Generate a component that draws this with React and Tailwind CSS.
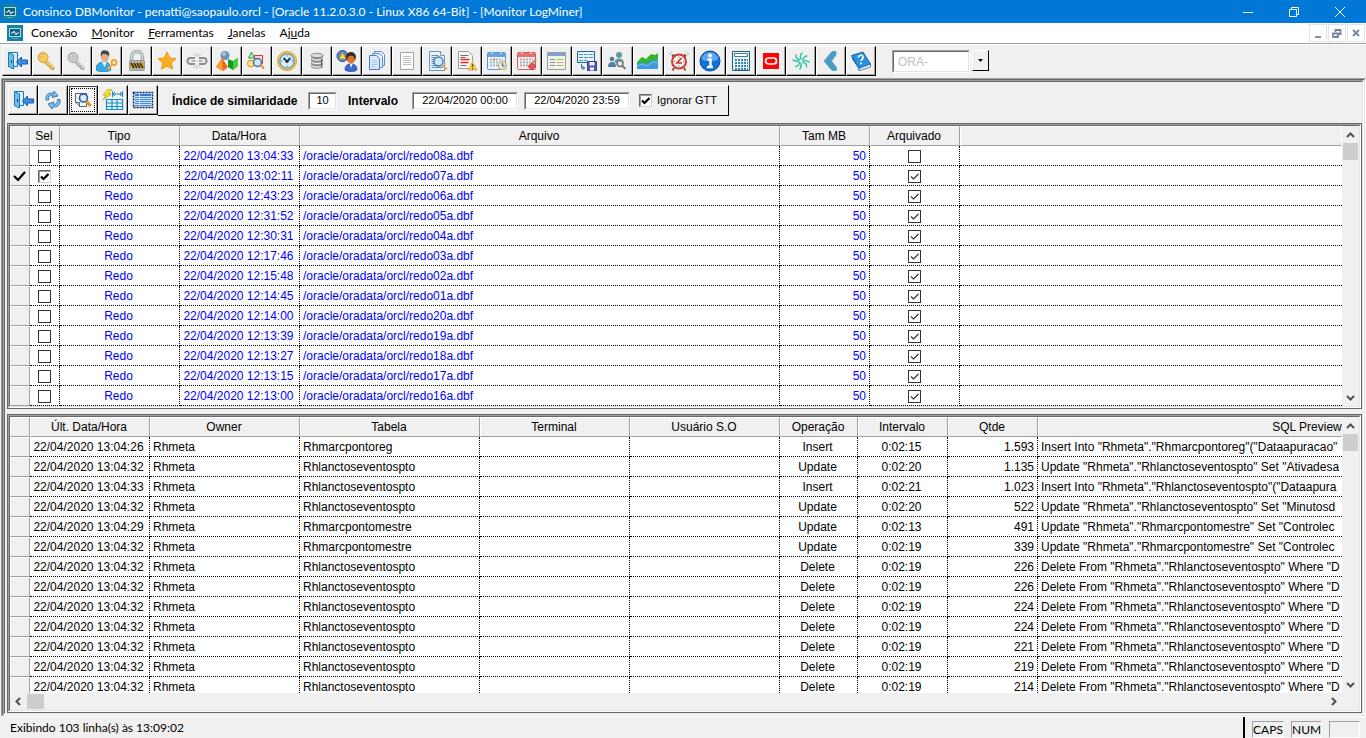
import { useState } from 'react';

const LOGS = [
  ['22/04/2020 13:04:33', '08a', false],
  ['22/04/2020 13:02:11', '07a', true],
  ['22/04/2020 12:43:23', '06a', true],
  ['22/04/2020 12:31:52', '05a', true],
  ['22/04/2020 12:30:31', '04a', true],
  ['22/04/2020 12:17:46', '03a', true],
  ['22/04/2020 12:15:48', '02a', true],
  ['22/04/2020 12:14:45', '01a', true],
  ['22/04/2020 12:14:00', '20a', true],
  ['22/04/2020 12:13:39', '19a', true],
  ['22/04/2020 12:13:27', '18a', true],
  ['22/04/2020 12:13:15', '17a', true],
  ['22/04/2020 12:13:00', '16a', true],
];

const EV = 'Rhlanctoseventospto';
const DEL = 'Delete From "Rhmeta"."Rhlanctoseventospto" Where "D';
const OPS = [
  ['26', 'Rhmarcpontoreg', 'Insert', '0:02:15', '1.593', 'Insert Into "Rhmeta"."Rhmarcpontoreg"("Dataapuracao"'],
  ['32', EV, 'Update', '0:02:20', '1.135', 'Update "Rhmeta"."Rhlanctoseventospto" Set "Ativadesa'],
  ['33', EV, 'Insert', '0:02:21', '1.023', 'Insert Into "Rhmeta"."Rhlanctoseventospto"("Dataapura'],
  ['32', EV, 'Update', '0:02:20', '522', 'Update "Rhmeta"."Rhlanctoseventospto" Set "Minutosd'],
  ['29', 'Rhmarcpontomestre', 'Update', '0:02:13', '491', 'Update "Rhmeta"."Rhmarcpontomestre" Set "Controlec'],
  ['32', 'Rhmarcpontomestre', 'Update', '0:02:19', '339', 'Update "Rhmeta"."Rhmarcpontomestre" Set "Controlec'],
  ['32', EV, 'Delete', '0:02:19', '226', DEL],
  ['32', EV, 'Delete', '0:02:19', '226', DEL],
  ['32', EV, 'Delete', '0:02:19', '224', DEL],
  ['32', EV, 'Delete', '0:02:19', '224', DEL],
  ['32', EV, 'Delete', '0:02:19', '221', DEL],
  ['32', EV, 'Delete', '0:02:19', '219', DEL],
  ['32', EV, 'Delete', '0:02:19', '214', DEL],
];

// toolbar drawings, all on a 22x22 grid
const ICONS = {
  door: <>
    <path d="M2.5 2.5h9v14h-9z" fill="#d9efff" stroke="#1f78b4" />
    <path d="M2.5 2.5l5 2.500v14l-5-2.500z" fill="#6cc0ee" stroke="#1f78b4" />
    <path d="M5.500 10v3" stroke="#0b3f77" />
    <path d="M10.500 12l5-5v3h6v4h-6v3z" fill="#3a8fe2" stroke="#0f5cab" />
  </>,
  key: <>
    <path d="M10 9.500l8 8v2h-2.500l-1.500-1.500 .5-1.500-1.500 .5-5-5z" fill="#edba3c" stroke="#c08f26" strokeWidth=".8" />
    <circle cx="7" cy="7.500" r="5" fill="#f6cd58" stroke="#d3a136" />
    <circle cx="5.200" cy="5.800" r="1.400" fill="#fff6d4" stroke="#b9882a" strokeWidth=".6" />
    <path d="M10.500 11l7 7" stroke="#fbe29a" />
  </>,
  keyGray: <>
    <path d="M10 9.500l8 8v2h-2.500l-1.500-1.500 .5-1.500-1.500 .5-5-5z" fill="#bdbdbd" stroke="#989898" strokeWidth=".8" />
    <circle cx="7" cy="7.500" r="5" fill="#cacaca" stroke="#a8a8a8" />
    <circle cx="5.200" cy="5.800" r="1.400" fill="#f8f8f8" stroke="#949494" strokeWidth=".6" />
    <path d="M10.500 11l7 7" stroke="#e2e2e2" />
  </>,
  userKey: <>
    <path d="M0 20c0-6 3-8 8-8s6 2 7 8c-4 2.500-11 2.500-15 0z" fill="#35a9e6" stroke="#1479b8" strokeWidth=".7" />
    <path d="M6 12l2.500 5 2-5z" fill="#fff" />
    <ellipse cx="9" cy="6.500" rx="4" ry="5.500" fill="#e0ab8a" />
    <path d="M5 7C3.500 1 7-.5 9.500 .5c4 0 4 3 3.500 6C11.500 4 9 4 6.500 4z" fill="#4a4444" />
    <circle cx="18" cy="12.500" r="2.500" fill="none" stroke="#f2a12c" strokeWidth="1.800" />
    <path d="M16 14.500l-4.500 4.500m1-1l1.500 1.500" stroke="#f2a12c" strokeWidth="1.800" />
  </>,
  lock: <>
    <path d="M5.500 11V7a5.500 5.500 0 0 1 11 0v4" fill="none" stroke="#8ea0a0" strokeWidth="3.400" />
    <path d="M5.500 11V7a5.500 5.500 0 0 1 11 0v4" fill="none" stroke="#d3dddd" strokeWidth="1.500" />
    <rect x="3.500" y="10.500" width="15" height="10" rx="1" fill="#b4b4ae" stroke="#85857e" strokeWidth=".7" />
    <rect x="4" y="13" width="14" height="5" fill="#e5a52b" />
    <path d="M5 13l3 5m0-5l3 5m0-5l3 5m0-5l3 5" stroke="#2b2b22" strokeWidth="1.500" />
  </>,
  star: <path d="M11 2l2.800 5.900 6.200.8-4.600 4.300 1.200 6.200-5.600-3-5.600 3 1.200-6.200L2 8.700l6.200-.8z" fill="#fbad22" stroke="#ef9a14" strokeLinejoin="round" />,
  link: <>
    <g fill="none" stroke="#8d8d8d" strokeWidth="2">
      <path d="M9 8H4.500a3 3 0 0 0 0 6H9M13 8h4.500a3 3 0 0 1 0 6H13" />
    </g>
    <path d="M5.500 11h4M12.500 11h4" stroke="#9c9c9c" strokeWidth="1.600" />
    <path d="M11 3v4M7.500 4l1.500 2.500M14.500 4L13 6.500M11 15v4M7.500 18L9 15.500m5.500 2.500L13 15.500" stroke="#bcbcbc" />
  </>,
  shapes: <>
    <circle cx="9" cy="5.500" r="4.500" fill="#6d93b8" />
    <circle cx="8" cy="4" r="2" fill="#a9c4dc" />
    <path d="M6 8l6 9-5 4-7-4z" fill="#f1641d" />
    <path d="M6 8L0 17l7 4z" fill="#fb9d35" />
    <path d="M12 9l5 2 5-3v8l-5 4-5-3z" fill="#159a25" />
    <path d="M17 11l5-3v8l-5 4z" fill="#49cf3c" />
  </>,
  shapeFind: <>
    <path d="M5.500 2L8.500 8h-6z" fill="#c2efc2" stroke="#25a245" />
    <circle cx="5" cy="13.500" r="3.500" fill="#fbe384" stroke="#e08a1c" />
    <path d="M8.500 5.500h8v8h-8z" fill="#ffd9d2" stroke="#d93a28" />
    <circle cx="11.500" cy="12.500" r="4" fill="#cfe6fb" stroke="#3b6fb4" strokeWidth="1.400" />
    <path d="M14.500 15l3.500 3.500" stroke="#e38b23" strokeWidth="2" />
  </>,
  clock: <>
    <circle cx="11" cy="11" r="9.500" fill="#f7c94c" stroke="#d69f2c" />
    <circle cx="11" cy="11" r="7.200" fill="#d9ecfa" stroke="#5e93bf" strokeWidth="1.300" />
    <path d="M11 5v1.500M11 15.500V17M5 11h1.500m9 0H17" stroke="#4785b8" />
    <path d="M7.500 8l3.500 3.500L14.500 8" fill="none" stroke="#1d3552" strokeWidth="1.800" />
    <circle cx="11" cy="11.500" r="1.500" fill="#1d3552" />
  </>,
  db: <>
    <path d="M5 5.500v11c0 3 12 3 12 0v-11z" fill="#8d8d8d" />
    <path d="M5.500 8c1 2.700 10 2.700 11 0M5.500 11.500c1 2.700 10 2.700 11 0M5.500 15c1 2.700 10 2.700 11 0" fill="none" stroke="#f2f2f2" strokeWidth="1.200" />
    <ellipse cx="11" cy="5.500" rx="6" ry="2.200" fill="#dcdcdc" stroke="#8a8a8a" />
    <path d="M15.500 9v8" stroke="#5c5c5c" />
  </>,
  group: <>
    <circle cx="6.500" cy="6" r="5.500" fill="#5c86d8" stroke="#24479e" />
    <path d="M6.500 2l3.500 7H3z" fill="#f5dc3a" stroke="#a88a11" strokeWidth=".7" />
    <circle cx="15" cy="7" r="5" fill="#3b2a20" />
    <circle cx="15" cy="9.500" r="3.700" fill="#e07124" />
    <path d="M9 20c0-5 3-6 6-6s6 1 6 6c-3 2-9 2-12 0z" fill="#3d66d4" stroke="#234398" strokeWidth=".7" />
    <path d="M14 14l1 4 1.500-4z" fill="#fff" />
  </>,
  pages: <>
    <path d="M8.500 1.500h7l3 3v11h-10z" fill="#e8f1ff" stroke="#5c8bd6" />
    <path d="M6.500 3.500h7l3 3v11h-10z" fill="#e8f1ff" stroke="#5c8bd6" />
    <path d="M3.500 5.500h7l3 3v11h-10z" fill="#dbe9fd" stroke="#4a7acb" />
    <path d="M5.500 10.500h6m-6 2h6m-6 2h6m-6 2h4" stroke="#a9c6f0" />
  </>,
  page: <>
    <path d="M4.500 2.500h13v17h-13z" fill="#fdfdfd" stroke="#a3a3a3" />
    <path d="M7 6.500h8m-8 2h8m-8 2h8m-8 2h8m-8 2h8" stroke="#c0c0c0" />
  </>,
  pageFind: <>
    <path d="M3.500 1.500h11l4 4v15h-15z" fill="#eaf3fc" stroke="#6d93bb" />
    <path d="M14.500 1.500v4h4" fill="#fff" stroke="#6d93bb" />
    <path d="M5.500 5.500h7m-7 2h9m-9 2h4m-4 2h3m-3 2h3m-3 2h5m-5 2h11" stroke="#5f8cb8" />
    <circle cx="12.500" cy="11.500" r="4.500" fill="#d2eafb" stroke="#3b7cb4" strokeWidth="1.400" />
    <path d="M16 15l5 4.500" stroke="#e5a552" strokeWidth="2.200" />
  </>,
  pageWarn: <>
    <path d="M2.500 1.500h10l4 4v13h-14z" fill="#f6f6f6" stroke="#9c9c9c" />
    <path d="M4.500 5.500h8m-8 2h5m-5 8h6" stroke="#707070" />
    <path d="M4.500 9.500h9m-9 3h8" stroke="#e02b2b" strokeWidth="1.300" />
    <path d="M16.500 11.500l4.500 8.500h-9z" fill="#f6cf57" stroke="#dfb04a" strokeLinejoin="round" />
    <path d="M16.500 14v3m0 1v1.500" stroke="#6b4c05" strokeWidth="1.200" />
  </>,
  cal: <>
    <rect x="1.500" y="2.500" width="18" height="17" rx="1" fill="#eef4fb" stroke="#5b92c8" />
    <path d="M2 3h17v4H2z" fill="#67a5dd" />
    <path d="M6 1v3m9-3v3" stroke="#c6def2" strokeWidth="1.500" />
    <path d="M4 9.500h13M4 12.500h13M4 15.500h13" stroke="#a3b7cc" strokeWidth="2" strokeDasharray="2 1" />
    <path d="M7 9.500h2" stroke="#ef7d2c" strokeWidth="2" />
    <circle cx="16.500" cy="15.500" r="4" fill="#dcecf8" stroke="#e3b458" strokeWidth="1.500" />
    <path d="M16.500 13v3h2" fill="none" stroke="#2b5581" />
  </>,
  calRed: <>
    <rect x="1.500" y="2.500" width="18" height="17" rx="1" fill="#fbeeee" stroke="#d05c5c" />
    <path d="M2 3h17v4H2z" fill="#e87070" />
    <path d="M6 1v3m9-3v3" stroke="#f6c7c7" strokeWidth="1.500" />
    <path d="M4 9.500h13M4 12.500h13M4 15.500h13" stroke="#aab0b6" strokeWidth="2" strokeDasharray="2 1" />
    <path d="M12 16.500l4-3.500 4 3-4 4z" fill="#e2545c" stroke="#c83a42" />
    <path d="M17 13l3-3.500" stroke="#cf7b4a" strokeWidth="2" />
  </>,
  form: <>
    <path d="M1.500 2.500h18v17h-18z" fill="#f6f2e2" stroke="#9c9c9c" />
    <path d="M2 3h17v3H2z" fill="#7fa3d8" />
    <path d="M4 9.500h5m-5 3h5m-5 3h5" stroke="#6d93cf" />
    <path d="M10.500 9.500h7m-7 3h7m-7 3h7" stroke="#b9ae8b" />
  </>,
  gridSave: <>
    <path d="M1.500 1.500h17v11h-17z" fill="#e6f4fb" stroke="#24658f" />
    <path d="M3 4.500h14M3 7.500h14M3 10.500h8" stroke="#4b95bd" strokeDasharray="4 1" />
    <path d="M5.500 14v4h3m-2-2l2 2-2 2" fill="none" stroke="#1f6795" />
    <path d="M11.500 11.500h9v9h-9z" fill="#5458b4" stroke="#3a3d8c" />
    <path d="M13.500 12h5v3.500h-5zM14 17.500h4v3h-4z" fill="#eef" />
  </>,
  userFind: <>
    <circle cx="13" cy="5" r="3" fill="#5f9c94" />
    <path d="M8.500 13c0-3.500 2-4.500 4.500-4.500s4.500 1 4.500 4.500z" fill="#6b9fae" />
    <circle cx="6" cy="9" r="2.300" fill="#4d7b9d" />
    <path d="M2 17c0-3.500 1.500-5 4-5s4 1.500 4 5z" fill="#4f81a5" />
    <circle cx="14" cy="13.500" r="3" fill="#dfe9ec" stroke="#6d777c" strokeWidth="1.500" />
    <path d="M16.500 16l3 3" stroke="#6d777c" strokeWidth="1.800" />
  </>,
  chart: <>
    <path d="M0 12l5-5 4 2 5-5 4 1 3-2v11H0z" fill="#35b52c" />
    <path d="M0 14l5-2 4 2 6-4 3 1 3-3v11H0z" fill="#3f97df" />
    <path d="M0 16l6-2 4 2 6-4 5 1" fill="none" stroke="#84c5f3" />
  </>,
  alarm: <>
    <path d="M2 5V3.500L4 1.500M20 5V3.500l-2-2" fill="none" stroke="#8aa9c4" strokeDasharray="2 1" />
    <path d="M6 4.500l-2 2M16 4.500l2 2M6 18l-1.500 2.500m11.500-2.500l1.500 2.500" stroke="#8a4a42" strokeWidth="1.800" />
    <circle cx="11" cy="11.500" r="7" fill="#eef1f4" stroke="#cf3a34" strokeWidth="2" />
    <path d="M11 6.500v1m0 8v1m-5-5h1m8 0h1" stroke="#666" />
    <path d="M13.500 8l-4.500 5h5" fill="none" stroke="#cb2e27" strokeWidth="1.600" />
  </>,
  info: <>
    <circle cx="11" cy="11" r="10" fill="#1470d4" stroke="#0a48a0" />
    <path d="M2.500 9C4 0 18 0 19.500 9c-4 3-13 3-17 0z" fill="#5aa9ee" />
    <circle cx="11" cy="5.500" r="2" fill="#fff" />
    <path d="M8.500 9.500H11.500v7.500m-3.500 0h6" fill="none" stroke="#fff" strokeWidth="2.400" />
  </>,
  calc: <>
    <path d="M2.500 1.500h17v19h-17z" fill="#e9f4f8" stroke="#1d5f79" />
    <path d="M4.500 3.500h13v3h-13z" fill="#fff" stroke="#3f7c94" />
    <path d="M5 10h13M5 13h13M5 16h13M5 19h13" stroke="#3a86a8" strokeWidth="2" strokeDasharray="2 1" />
  </>,
  oracle: <>
    <path d="M3 3h16v16H3z" fill="#fb0606" />
    <rect x="5.500" y="8" width="11" height="6" rx="3" fill="none" stroke="#fff" strokeWidth="1.700" />
  </>,
  spark: <g stroke="#2cc2a2" strokeWidth="1.400" fill="none" strokeLinecap="round">
    <path d="M11 9c-1-2-1-4 1-6M13 10c0-2 2-4 4-4M13 11c2-1 4 0 6 1M13 12.500c2 0 4 2 3.500 4.500M11 13c1 2 0 4-1 6M9.500 12.500c0 2-2 4-4 4M9 11c-2 1-4 0-6-1M9.500 9.500c-2 0-4-2-3.500-4.500" />
  </g>,
  back: <path d="M16 1.500h-4L4 11l8 9.500h4.500v-3L11.500 11 16 5z" fill="#4a9dc2" stroke="#3686ab" strokeWidth=".5" />,
  book: <>
    <path d="M1.500 5.500L13 2l7.500 12L9 18.500z" fill="#2a90dd" stroke="#1568ab" />
    <path d="M9 18.500l11.500-4.500v3L10 20.500C8 20.500 8 19.500 9 18.500z" fill="#eef3f7" stroke="#31668f" strokeWidth=".8" />
    <path d="M1.500 5.500L9 18.500c-1 1 0 2 1 2L2 9z" fill="#1568ab" />
    <path d="M8 7.500c1-3 5-3 5 0 0 2-2 2-2 3.500m0 1.500v1.800" fill="none" stroke="#fff" strokeWidth="1.700" />
  </>,
  refresh: <>
    <path d="M4 11c-1-5 3-8 7-6.500l1-2.500 4 5-6 1.500 1-2c-3-1-4.500 1-4.500 4.500z" fill="#7fbde8" stroke="#2a74aa" strokeWidth=".9" />
    <path d="M18 10.500c1 5-3 8.500-7 7L10 20l-4-5 6-2-1 2c3 1 4.500-1 4.500-4.500z" fill="#7fbde8" stroke="#2a74aa" strokeWidth=".9" />
  </>,
  preview: <>
    <path d="M3.500 4.500h11v13h-7l-4-4z" fill="#f2f5f9" stroke="#5b6472" />
    <path d="M3.500 13.500h4v4" fill="#c7ccd4" stroke="#5b6472" />
    <circle cx="11.500" cy="9" r="4" fill="#d6ebfd" stroke="#2f5aa8" strokeWidth="1.600" />
    <path d="M14.500 12l4 5" stroke="#e6961e" strokeWidth="3" />
  </>,
  gridFlash: <>
    <path d="M6 0L1 6h3l-3 5 8-6H6l4-5z" fill="#f7ec1e" stroke="#a89c08" strokeWidth=".7" />
    <path d="M10.500 2v6m10-6v6M11 5h9m-7-2l-2 2 2 2m5-4l2 2-2 2" fill="none" stroke="#1b8ac6" />
    <path d="M4.500 10.500h16v10h-16zM4.500 14h16M4.500 17.500h16M10 10.500v10M15 10.500v10" fill="#e4f5fd" stroke="#1b8ac6" strokeWidth="1.200" />
  </>,
  sheet: <>
    <path d="M1.500 3.500h19v15h-19z" fill="#c8e4fa" stroke="#12264d" strokeWidth="1.400" strokeDasharray="2 1" />
    <path d="M3 5h16v2H3z" fill="#3d78cc" />
    <path d="M3 8.500h16M3 10.500h16M3 12.500h16M3 14.500h16M3 16.500h16" stroke="#5088d2" />
    <path d="M7.500 5v12" stroke="#c8e4fa" />
  </>,
};

const MAIN_BAR = [
  ['door', 'Desconectar'], ['key', 'Conectar'], ['keyGray', 'Trocar senha'], ['userKey', 'Usuários'], ['lock', 'Locks'],
  ['star', 'Favoritos'], ['link', 'Links'], ['shapes', 'Objetos'], ['shapeFind', 'Localizar objetos'], ['clock', 'Sessões'],
  ['db', 'Tablespaces'], ['group', 'Grupos'], ['pages', 'Scripts'], ['page', 'Novo'], ['pageFind', 'Pesquisar'],
  ['pageWarn', 'Alertas'], ['cal', 'Jobs'], ['calRed', 'Jobs removidos'], ['form', 'Parâmetros'], ['gridSave', 'Exportar'],
];
const WIDE_BAR = [['userFind', 'Localizar usuário'], ['chart', 'Gráfico'], ['alarm', 'Alarme'], ['info', 'Informações']];
const END_BAR = [['calc', 'Calculadora'], ['oracle', 'Oracle'], ['spark', 'Consinco'], ['back', 'Voltar'], ['book', 'Ajuda']];
const SUB_BAR = [['door', 'Sair'], ['refresh', 'Atualizar'], ['preview', 'Visualizar'], ['gridFlash', 'Executar'], ['sheet', 'Selecionar']];

const SUNKEN = 'border border-t-[#a0a0a0] border-l-[#a0a0a0] border-r-white border-b-white';
const SUNKEN_IN = 'border border-t-[#696969] border-l-[#696969] border-r-[#e3e3e3] border-b-[#e3e3e3]';
const HEAD = 'h-[20px] bg-[#f0f0f0] border-t border-l border-t-white border-l-white border-r border-b border-r-[#a0a0a0] border-b-[#a0a0a0] py-0 pl-0 pr-[2px] font-normal text-center overflow-hidden';
const CELL = 'h-[20px] border-r border-b border-dotted border-black py-0 overflow-hidden';
const LEFT = `${CELL} px-[3px] text-left`;
const RIGHT = `${CELL} px-[3px] text-right`;
const CENTER = `${CELL} pl-0 pr-[2px] text-center`;
const BOX = 'h-[20px] border-r border-b border-dotted border-black px-0 pt-[2px] pb-0 text-center leading-[12px]';

function ToolButton({ icon, label, wide, active }) {
  return (
    <button
      type="button"
      title={label}
      aria-label={label}
      className={`${wide ? 'w-[31px]' : 'w-[30px]'} h-[30px] shrink-0 bg-[#f0f0f0] border border-t-white border-l-white border-r-black border-b-black`}
    >
      <span className={`flex h-full w-full items-center justify-center border-r border-b border-[#a0a0a0] ${active ? 'border-t border-l border-t-[#404040] border-l-[#404040] bg-[#f8f8f8] p-px' : ''}`}>
        <span className={active ? 'flex h-full w-full items-center justify-center border border-dotted border-black' : ''}>
          <svg viewBox="0 0 22 22" className="block h-[22px] w-[22px]">{ICONS[icon]}</svg>
        </span>
      </span>
    </button>
  );
}

function Sunken({ className, children }) {
  return (
    <div className={`flex ${SUNKEN} ${className || ''}`}>
      <div className={`flex min-w-0 flex-1 ${SUNKEN_IN}`}>{children}</div>
    </div>
  );
}

function Check({ label, checked, onChange, classic, faint }) {
  return (
    <span className="inline-grid h-[13px] w-[13px] align-middle">
      <input
        type="checkbox"
        aria-label={label}
        checked={checked}
        onChange={onChange}
        className={`col-start-1 row-start-1 h-[13px] w-[13px] appearance-none border bg-white ${classic ? 'border-t-[#696969] border-l-[#696969] border-r-[#d0d0d0] border-b-[#d0d0d0] shadow-[inset_1px_1px_0_#a0a0a0]' : 'border-[#333333]'}`}
      />
      {checked && (
        <svg viewBox="0 0 13 13" className="pointer-events-none z-10 col-start-1 row-start-1 h-[13px] w-[13px]">
          <path d="M3 6.500l2.500 2.500 5-5" fill="none" stroke={faint ? '#333' : '#000'} strokeWidth={faint ? 1.2 : 2.2} />
        </svg>
      )}
    </span>
  );
}

function Arrow({ d }) {
  return (
    <svg viewBox="0 0 17 17" className="block h-[17px] w-[17px]">
      <path d={d} fill="none" stroke="#505050" strokeWidth="2" />
    </svg>
  );
}

function VScroll() {
  return (
    <div className="flex w-[17px] shrink-0 flex-col bg-[#f0f0f0]">
      <button type="button" aria-label="Para cima"><Arrow d="M5 11l3.500-3.500L12 11" /></button>
      <div className="mx-px h-[17px] bg-[#cdcdcd]" />
      <button type="button" aria-label="Para baixo" className="mt-auto"><Arrow d="M5 7l3.500 3.500L12 7" /></button>
    </div>
  );
}

function AppIcon({ className }) {
  return (
    <svg viewBox="0 0 16 16" className={`h-[16px] w-[16px] ${className}`}>
      <path d="M0 0h16v16H0z" fill="#1481a2" />
      <path d="M2.500 3.500h11v8h-11z" fill="#0e6480" stroke="#b4dbe6" />
      <path d="M4 8h2l1-2 2 4 1-2h2" fill="none" stroke="#e9f8fb" />
      <path d="M5 13.500h6" stroke="#4fa3bb" />
    </svg>
  );
}

function TitleBar() {
  return (
    <header className="flex h-[23px] shrink-0 items-center bg-[#0078d7] pl-[2px] text-white">
      <AppIcon className="mr-[5px]" />
      <h1 className="flex-1 truncate text-[12px]">Consinco DBMonitor - penatti@saopaulo.orcl - [Oracle 11.2.0.3.0 - Linux X86 64-Bit] - [Monitor LogMiner]</h1>
      <div className="mr-[3px] flex">
        {[
          ['Minimizar', 'M0 5.500h10'],
          ['Restaurar', 'M.5 2.500h7v7h-7zM2.500 2.500v-2h7v7h-2'],
          ['Fechar', 'M0 0l10 10M10 0L0 10'],
        ].map(([label, d]) => (
          <button key={label} type="button" aria-label={label} className="flex h-[20px] w-[46px] items-center justify-center">
            <svg viewBox="0 0 10 10" className="h-[10px] w-[10px]"><path d={d} fill="none" stroke="#fff" /></svg>
          </button>
        ))}
      </div>
    </header>
  );
}

function MenuBar() {
  return (
    <nav className="flex h-[20px] shrink-0 items-center bg-white pl-[7px] text-[12px]">
      <AppIcon className="mr-px" />
      <div className="flex flex-1">
        <button type="button" className="px-[7px]">Conexão</button>
        <button type="button" className="px-[7px]"><u>M</u>onitor</button>
        <button type="button" className="px-[7px]"><u>F</u>erramentas</button>
        <button type="button" className="px-[7px]"><u>J</u>anelas</button>
        <button type="button" className="px-[7px]">Aj<u>u</u>da</button>
      </div>
      <div className="mr-px flex gap-px">
        {[
          ['Minimizar janela', 'M2 9h6'],
          ['Restaurar janela', 'M1 5.500h5v3.500h-5zM3.500 4V2h5v4H7'],
          ['Fechar janela', 'M2 2l6 6M8 2L2 8'],
        ].map(([label, d]) => (
          <button key={label} type="button" aria-label={label} className="flex h-[18px] w-[18px] items-center justify-center border border-[#e3e3e3]">
            <svg viewBox="0 0 10 10" className="h-[10px] w-[10px]"><path d={d} fill="none" stroke="#75869a" strokeWidth="1.800" /></svg>
          </button>
        ))}
      </div>
    </nav>
  );
}

function LogTable() {
  const [selected, setSelected] = useState([1]);
  const toggle = (i) => setSelected((p) => (p.includes(i) ? p.filter((x) => x !== i) : [...p, i]));

  return (
    <table className="w-full table-fixed border-separate border-spacing-0 whitespace-nowrap text-[12px] leading-[16px]">
      <colgroup>
        <col className="w-[20px]" />
        <col className="w-[30px]" />
        <col className="w-[120px]" />
        <col className="w-[120px]" />
        <col className="w-[480px]" />
        <col className="w-[90px]" />
        <col className="w-[90px]" />
        <col />
      </colgroup>
      <thead>
        <tr>
          {['', 'Sel', 'Tipo', 'Data/Hora', 'Arquivo', 'Tam MB', 'Arquivado', ''].map((h, i) => <th key={i} className={`${HEAD} last:border-r-white`}>{h}</th>)}
        </tr>
      </thead>
      <tbody className="text-[#0000ff]">
        {LOGS.map(([date, file, archived], i) => (
          <tr key={file}>
            <td className={HEAD}>
              {selected.includes(i) && (
                <svg viewBox="0 0 14 12" className="mx-auto h-[12px] w-[14px]">
                  <path d="M2 6l4 4 7-8" fill="none" stroke="#000" strokeWidth="2.200" />
                </svg>
              )}
            </td>
            <td className={BOX}>
              <Check label={`Selecionar redo${file}`} checked={selected.includes(i)} onChange={() => toggle(i)} classic={selected.includes(i)} />
            </td>
            <td className={CENTER}>Redo</td>
            <td className={CENTER}>{date}</td>
            <td className={LEFT}>/oracle/oradata/orcl/redo{file}.dbf</td>
            <td className={RIGHT}>50</td>
            <td className={BOX}>
              <Check label={`Arquivado redo${file}`} checked={archived} onChange={() => {}} faint />
            </td>
            <td className={`${CELL} border-r-0`}></td>
          </tr>
        ))}
      </tbody>
    </table>
  );
}

function OpsTable() {
  return (
    <table className="w-[1568px] table-fixed border-separate border-spacing-0 whitespace-nowrap text-[12px] leading-[16px]">
      <colgroup>
        <col className="w-[20px]" />
        <col className="w-[120px]" />
        <col className="w-[150px]" />
        <col className="w-[180px]" />
        <col className="w-[150px]" />
        <col className="w-[150px]" />
        <col className="w-[78px]" />
        <col className="w-[90px]" />
        <col className="w-[90px]" />
        <col className="w-[540px]" />
      </colgroup>
      <thead>
        <tr>
          {['', 'Últ. Data/Hora', 'Owner', 'Tabela', 'Terminal', 'Usuário S.O', 'Operação', 'Intervalo', 'Qtde', 'SQL Preview'].map((h, i) => <th key={i} className={HEAD}>{h}</th>)}
        </tr>
      </thead>
      <tbody>
        {OPS.map(([sec, table, op, interval, qty, sql], i) => (
          <tr key={i}>
            <td className={HEAD}></td>
            <td className={CENTER}>22/04/2020 13:04:{sec}</td>
            <td className={LEFT}>Rhmeta</td>
            <td className={LEFT}>{table}</td>
            <td className={LEFT}></td>
            <td className={LEFT}></td>
            <td className={CENTER}>{op}</td>
            <td className={CENTER}>{interval}</td>
            <td className={RIGHT}>{qty}</td>
            <td className={LEFT}>{sql}</td>
          </tr>
        ))}
      </tbody>
    </table>
  );
}

function Filters() {
  const [gtt, setGtt] = useState(true);
  const field = 'w-full min-w-0 bg-white text-center outline-none';
  return (
    <form className="flex h-[31px] w-[571px] items-center border-t border-r border-b border-t-white border-r-black border-b-black pl-[14px] text-[11px]">
      <label htmlFor="sim" className="w-[136px] text-[12px] font-bold">Índice de similaridade</label>
      <Sunken className="h-[18px] w-[29px]"><input id="sim" defaultValue="10" className={field} /></Sunken>
      <label htmlFor="from" className="ml-[11px] w-[64px] text-[12px] font-bold">Intervalo</label>
      <Sunken className="h-[18px] w-[106px]"><input id="from" defaultValue="22/04/2020 00:00" className={field} /></Sunken>
      <Sunken className="ml-[6px] h-[18px] w-[106px]"><input aria-label="Intervalo final" defaultValue="22/04/2020 23:59" className={field} /></Sunken>
      <label className="ml-[9px] flex items-center gap-[5px]">
        <Check label="Ignorar GTT" checked={gtt} onChange={() => setGtt(!gtt)} classic />
        Ignorar GTT
      </label>
    </form>
  );
}

export default function App() {
  return (
    <div className="flex h-screen flex-col overflow-hidden bg-[#f0f0f0] font-['Liberation_Sans',Arial,sans-serif] text-black">
      <div className="font-['Lato','Segoe_UI',sans-serif]">
        <TitleBar />
        <MenuBar />
      </div>

      <div className="flex h-[35px] shrink-0 items-start border-t border-[#a0a0a0] pl-[2px] shadow-[inset_0_1px_0_#fff]">
        <div className="flex pt-[2px]">
          {MAIN_BAR.map(([icon, label]) => <ToolButton key={icon} icon={icon} label={label} />)}
          {WIDE_BAR.map(([icon, label]) => <ToolButton key={icon} icon={icon} label={label} wide />)}
          {END_BAR.map(([icon, label]) => <ToolButton key={icon} icon={icon} label={label} />)}
        </div>
        <div className="mt-[6px] ml-[16px] flex gap-[2px]">
          <Sunken className="h-[23px] w-[78px]">
            <input aria-label="Código do erro" placeholder="ORA-" className="w-full min-w-0 bg-white pl-[4px] text-[12px] outline-none placeholder:text-[#c0c0c0]" />
          </Sunken>
          <button type="button" aria-label="Abrir lista" className="flex h-[21px] w-[17px] items-center justify-center border border-t-white border-l-white border-r-black border-b-black">
            <svg viewBox="0 0 5 3" className="h-[3px] w-[5px]"><path d="M0 0h5L2.500 3z" /></svg>
          </button>
        </div>
      </div>

      <Sunken className="ml-px min-h-0 flex-1">
        <Sunken className="min-w-0 flex-1">
          <main className="flex min-w-0 flex-1 flex-col pt-[3px] pl-[2px]">
            <div className="mb-[7px] flex shrink-0 pl-px">
              {SUB_BAR.map(([icon, label]) => <ToolButton key={icon} icon={icon} label={label} active={icon === 'preview'} />)}
              <Filters />
            </div>

            <section className="mb-[5px] flex h-[286px] shrink-0 border border-[#696969]">
              <Sunken className="min-w-0 flex-1">
                <div className="min-w-0 flex-1 overflow-hidden bg-white"><LogTable /></div>
                <VScroll />
              </Sunken>
            </section>

            <section className="flex min-h-0 flex-1 border border-[#696969]">
              <Sunken className="min-w-0 flex-1">
                <div className="flex min-w-0 flex-1 flex-col">
                  <div className="flex min-h-0 flex-1">
                    <div className="min-w-0 flex-1 overflow-hidden bg-white"><OpsTable /></div>
                    <VScroll />
                  </div>
                  <div className="flex h-[17px] shrink-0 bg-[#f0f0f0] pr-[17px]">
                    <button type="button" aria-label="Para a esquerda"><Arrow d="M10 5L6.500 8.500 10 12" /></button>
                    <div className="my-px w-[17px] bg-[#cdcdcd]" />
                    <button type="button" aria-label="Para a direita" className="ml-auto"><Arrow d="M7 5l3.500 3.500L7 12" /></button>
                  </div>
                </div>
              </Sunken>
            </section>
          </main>
        </Sunken>
      </Sunken>

      <footer className="flex h-[21px] shrink-0 items-center pr-[6px] pl-[10px] font-['Lato','Segoe_UI',sans-serif] text-[12px]">
        <span className="flex-1">Exibindo 103 linha(s) às 13:09:02</span>
        <div className="flex h-full items-end gap-[7px] border-l-2 border-black pl-[7px]">
          <span className={`h-[17px] w-[32px] text-center leading-[16px] ${SUNKEN}`}>CAPS</span>
          <span className={`h-[17px] w-[31px] text-center leading-[16px] ${SUNKEN}`}>NUM</span>
          <span className={`h-[17px] w-[31px] ${SUNKEN}`} />
        </div>
      </footer>
    </div>
  );
}
